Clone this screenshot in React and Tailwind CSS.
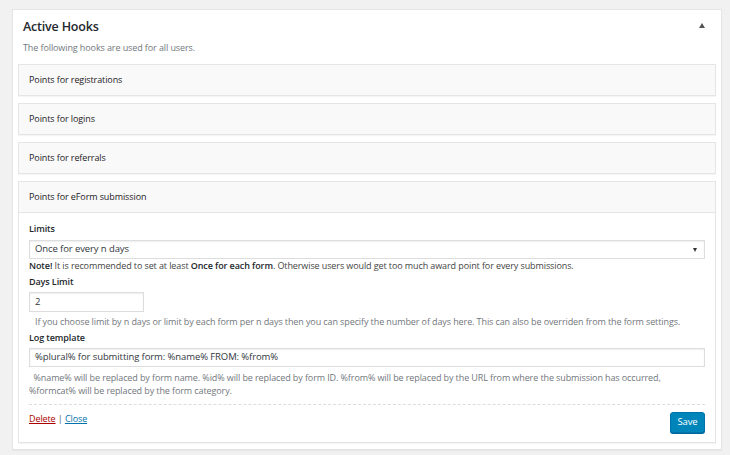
import React from 'react';

const hooks = ['Points for registrations', 'Points for logins', 'Points for referrals'];

const HookHeader = ({ title, open }) => (
  <div
    className={`h-[30px] flex items-center px-[10px] text-[9px] tracking-[-0.1px] font-medium text-[#1d2125] ${open ? 'h-[31px] border-b border-[#e5e5e5]' : ''}`}
  >
    {title}
  </div>
);

const App = () => {
  return (
    <div
      className="w-[730px] h-[455px] bg-[#f1f1f1] pt-[9px] pl-[12px] overflow-hidden"
      style={{ fontFamily: '"Open Sans", "Noto Sans", sans-serif' }}
    >
      <div className="w-[710px] h-[441px] bg-white border border-[#e5e5e5] shadow-[0_1px_1px_rgba(0,0,0,0.04)] px-[5px] relative">
        {/* Header */}
        <div className="pl-[5px] pt-[8px]">
          <h2 className="text-[12.5px] leading-[18px] tracking-[-0.2px] font-semibold text-[#23282d]">Active Hooks</h2>
          <p className="mt-[5px] text-[9px] leading-[13px] tracking-[-0.1px] text-[#72777c]">The following hooks are used for all users.</p>
        </div>
        <span className="absolute right-[16px] top-[13px] w-0 h-0 border-l-[3px] border-r-[3px] border-b-[5px] border-l-transparent border-r-transparent border-b-[#555]" />

        {/* Hooks */}
        <div className="mt-[10px] flex flex-col gap-[7px]">
          {hooks.map((h) => (
            <div key={h} className="bg-[#f9f9f9] border border-[#e5e5e5] shadow-[0_1px_1px_rgba(0,0,0,0.04)]">
              <HookHeader title={h} />
            </div>
          ))}

          <div className="bg-[#f9f9f9] border border-[#e5e5e5] h-[262px] shadow-[0_1px_1px_rgba(0,0,0,0.04)]">
            <HookHeader title="Points for eForm submission" open />
            <div className="bg-white h-[229px] px-[10px] pt-[9px] text-[9px] tracking-[-0.1px] text-[#444]">
              <div className="font-semibold text-[#23282d] leading-[14px]">Limits</div>
              <div className="mt-[4px] h-[19px] border border-[#ddd] shadow-[inset_0_1px_2px_rgba(0,0,0,0.07)] flex items-center justify-between pl-[5px] pr-[7px] text-[#32373c] text-[9.5px]">
                <span>Once for every n days</span>
                <span className="w-0 h-0 border-l-[2.5px] border-r-[2.5px] border-t-[4px] border-l-transparent border-r-transparent border-t-[#333]" />
              </div>
              <div className="leading-[13px]">
                <span className="font-semibold text-[#23282d]">Note!</span> It is recommended to set at least{' '}
                <span className="font-semibold text-[#23282d]">Once for each form</span>. Otherwise users would get too much award point for every submissions.
              </div>
              <div className="mt-[3px] font-semibold text-[#23282d] leading-[14px]">Days Limit</div>
              <div className="mt-[3px] w-[115px] h-[20px] border border-[#ddd] shadow-[inset_0_1px_2px_rgba(0,0,0,0.07)] flex items-center pl-[5px] text-[#32373c] text-[9.5px]">
                2
              </div>
              <div className="mt-[3px] pl-[6px] leading-[13px] text-[#72777c]">
                If you choose limit by n days or limit by each form per n days then you can specify the number of days here. This can also be overriden from the form settings.
              </div>
              <div className="mt-[3px] font-semibold text-[#23282d] leading-[14px]">Log template</div>
              <div className="mt-[3px] h-[19px] border border-[#ddd] shadow-[inset_0_1px_2px_rgba(0,0,0,0.07)] flex items-center pl-[5px] text-[#32373c] text-[9.5px]">
                %plural% for submitting form: %name% FROM: %from%
              </div>
              <div className="mt-[4px] leading-[13px] text-[#72777c] max-w-[645px]">
                &nbsp;&nbsp;%name% will be replaced by form name. %id% will be replaced by form ID. %from% will be replaced by the URL from where the submission has occurred, %formcat% will be replaced by the form category.
              </div>
              <div className="mt-[7px] border-t border-dashed border-[#ddd]" />
              <div className="mt-[7px] flex items-start justify-between">
                <div className="leading-[13px]">
                  <a className="text-[#a00] underline">Delete</a>
                  <span className="text-[#555]"> | </span>
                  <a className="text-[#0073aa] underline">Close</a>
                </div>
                <button className="h-[21px] w-[35px] rounded-[3px] bg-[#0085ba] border border-[#0073aa] text-white text-[9.5px] shadow-[0_1px_0_#006799]">
                  Save
                </button>
              </div>
            </div>
          </div>
        </div>
      </div>
    </div>
  );
};

export default App;
